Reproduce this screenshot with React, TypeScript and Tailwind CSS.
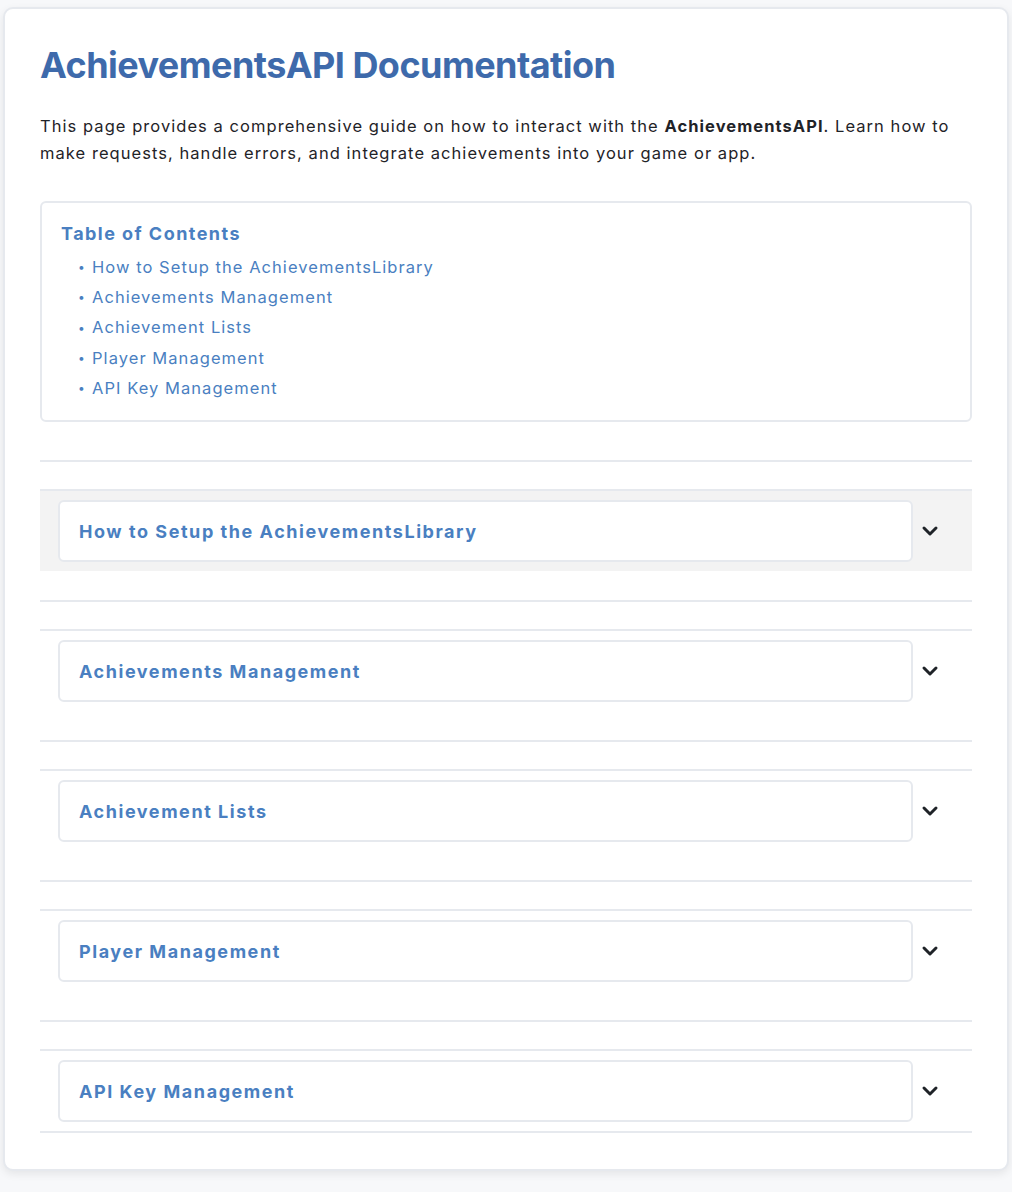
import { ChevronDown } from "lucide-react";

const SECTIONS = [
  "How to Setup the AchievementsLibrary",
  "Achievements Management",
  "Achievement Lists",
  "Player Management",
  "API Key Management",
];

function Section({ title, active, last }: { title: string; active: boolean; last: boolean }) {
  return (
    <div>
      <div className="h-[2px] bg-[#e6e9ee]" />
      <div className="mt-[27px] border-t-2 border-[#e6e9ee]">
        <div
          className={`flex items-center gap-[5px] pl-[18px] pr-[30px] py-[9px] ${active ? "bg-[#f3f3f3]" : ""}`}
        >
          <button className="flex-1 h-[62px] flex items-center px-[19px] bg-white border-2 border-[#e6e9ee] rounded-[6px] text-left">
            <span className="text-[18px] font-bold text-[#4a7fc1] tracking-[1.55px]">{title}</span>
          </button>
          <ChevronDown className="w-[24px] h-[24px] text-[#1f2328]" strokeWidth={3} />
        </div>
      </div>
      {last ? <div className="h-[2px] bg-[#e6e9ee]" /> : <div className="h-[29px]" />}
    </div>
  );
}

export default function App() {
  return (
    <div className="min-h-screen bg-[#f7f8fa] pt-[7px] px-[3px] pb-[22px] font-['Inter',sans-serif]">
      <div className="bg-white border-2 border-[#e6e9ee] rounded-[10px] shadow-[0_3px_8px_rgba(0,0,0,0.08)] px-[35px] pt-[36px] pb-[36px]">
        <h1 className="text-[36px] leading-[40px] font-bold text-[#3e6aab] tracking-[-0.55px]">
          AchievementsAPI Documentation
        </h1>
        <p className="mt-[28px] text-[16.5px] leading-[27px] text-[#1f2328] tracking-[1.05px]">
          This page provides a comprehensive guide on how to interact with the{" "}
          <strong className="font-bold">AchievementsAPI</strong>. Learn how to make requests, handle errors, and
          integrate achievements into your game or app.
        </p>

        <div className="mt-[34px] border-2 border-[#e6e9ee] rounded-[6px] px-[19px] pt-[20px] pb-[20px]">
          <h2 className="text-[18px] leading-[22px] font-bold text-[#4a7fc1] tracking-[1.45px]">
            Table of Contents
          </h2>
          <ul className="mt-[10px] flex flex-col gap-[6.35px]">
            {SECTIONS.map((s) => (
              <li key={s} className="flex items-center h-[24px] text-[16.5px] text-[#4a7fc1] tracking-[1.05px]">
                <span className="w-[31px] pl-[17px] text-[12px] tracking-normal">•</span>
                <span>{s}</span>
              </li>
            ))}
          </ul>
        </div>

        <div className="mt-[38px]">
          {SECTIONS.map((s, i) => (
            <Section key={s} title={s} active={i === 0} last={i === SECTIONS.length - 1} />
          ))}
        </div>
      </div>
    </div>
  );
}
